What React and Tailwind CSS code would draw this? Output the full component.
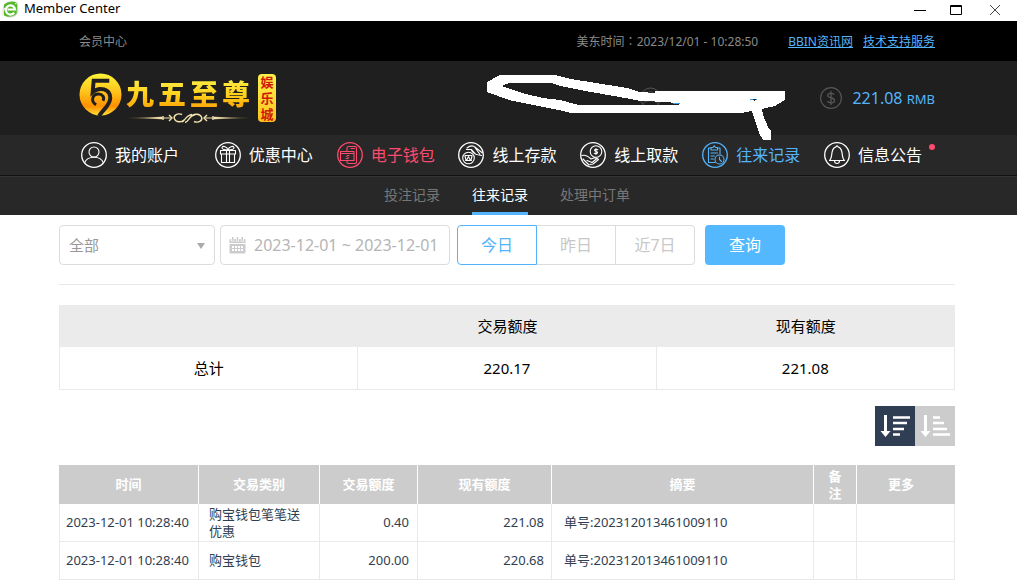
import React from "react";

const gold = "bg-linear-to-b from-[#fff24a] via-[#ffd21c] to-[#ff9a00]";

function BrowserMark() {
  return (
    <svg width="18" height="18" viewBox="0 0 18 18" aria-hidden="true">
      <circle cx="9.500" cy="9.500" r="8" fill="#d4d4d4" />
      <path d="M3 4.500 Q9 -0.500 16.500 2.500 L15.500 14 Q9.500 18.500 3 15.500 Z" fill="#55b82b" />
      <path d="M13.200 12.600 A4.600 4.600 0 1 1 14 9.500 H6.500" fill="none" stroke="#fff" strokeWidth="2.200" />
      <path d="M1.500 16 Q0.500 12 4 8 M14 4 Q17 1.500 16.500 4" fill="none" stroke="#eee" strokeWidth="1.200" />
    </svg>
  );
}

function CoinMark() {
  return (
    <svg width="43" height="43" viewBox="0 0 44 44" aria-hidden="true">
      <defs>
        <linearGradient id="coin" x1="0" y1="0" x2="0" y2="1">
          <stop offset="0" stopColor="#fff43a" />
          <stop offset="0.450" stopColor="#ffc21a" />
          <stop offset="0.780" stopColor="#ff8f00" />
          <stop offset="1" stopColor="#ffe23a" />
        </linearGradient>
      </defs>
      <circle cx="22" cy="22" r="21.500" fill="url(#coin)" />
      <path d="M31 8 H15 L14 19.500 C21 13.500 32 16.500 32 25.500 C32 33 24 38 20.500 44" fill="none" stroke="#1f1f1f" strokeWidth="4" />
      <path d="M17.500 32.500 C11.500 29 13.500 21.500 20 21.500 C24 21.500 26.500 25 24.500 28.500" fill="none" stroke="#1f1f1f" strokeWidth="3" />
    </svg>
  );
}

function Ornament() {
  return (
    <svg width="128" height="12" viewBox="0 0 128 12" fill="none" stroke="#f5e3b0" aria-hidden="true">
      <defs>
        <linearGradient id="fadeL"><stop offset="0" stopColor="#b08a48" stopOpacity="0.200" /><stop offset="1" stopColor="#fff0b8" /></linearGradient>
        <linearGradient id="fadeR"><stop offset="0" stopColor="#fff0b8" /><stop offset="1" stopColor="#b08a48" stopOpacity="0.200" /></linearGradient>
      </defs>
      <path d="M0 6 L36 4.800 V7.200 Z" fill="url(#fadeL)" stroke="none" />
      <path d="M126 6 L88 4.800 V7.200 Z" fill="url(#fadeR)" stroke="none" />
      <path d="M36 6 h10 M78 6 h10" />
      <path d="M37 4 v4 M87 4 v4 M43 3 l3 3 -3 3 M81 3 l-3 3 3 3" strokeWidth="1.400" />
      <path d="M56 2.500 C51 0.500 47 4 48.500 7 C50 10.500 56 10.500 58 8 M68 9.500 C73 11.500 77 8 75.500 5 C74 1.500 68 1.500 66 4" strokeWidth="1.400" />
      <path d="M56 10 C59 9 60 3 66 2.500 M59 10.500 C63 10 63 3.500 69 2.500" strokeWidth="1.300" />
    </svg>
  );
}

function Ring({ children }) {
  return (
    <svg width="26" height="26" viewBox="0 0 26 26" fill="none" stroke="currentColor" strokeWidth="1.100" strokeLinecap="round" strokeLinejoin="round" className="shrink-0" aria-hidden="true">
      <circle cx="13" cy="13" r="12.300" strokeWidth="1.300" />
      {children}
    </svg>
  );
}

const icons = {
  user: (
    <Ring>
      <circle cx="13" cy="10" r="5" />
      <path d="M3.500 21 C5 17 8.500 15.300 13 15.300 C17.500 15.300 21 17 22.500 21" />
    </Ring>
  ),
  gift: (
    <Ring>
      <path d="M5.500 8.500 H20.500 V12 H5.500 Z M6.500 12 V20.500 H19.500 V12 M11.500 8.500 V20.500 M14.500 8.500 V20.500" />
      <path d="M13 8 C10 8 6.500 7.500 7 5.500 C8 3.500 12 4.500 13 8 C14 4.500 18 3.500 19 5.500 C19.500 7.500 16 8 13 8" />
    </Ring>
  ),
  wallet: (
    <Ring>
      <path d="M10 9 V6 Q10 4.500 11.500 4.500 H18 Q19.500 4.500 19.500 6 V20 Q19.500 21.500 18 21.500 H11.500 Q10 21.500 10 20 V18.500" />
      <path d="M3.500 9.500 H17 V18.500 H3.500 Z M3.500 11.500 H17 M14 6.500 H17.500" />
      <path d="M12 13.500 C9 12.700 9 15 10.500 15 C12.500 15.200 12 17.400 9 16.500" strokeWidth="1" />
    </Ring>
  ),
  deposit: (
    <Ring>
      <circle cx="10.500" cy="16" r="5.800" />
      <path d="M7 13.500 H14 M7.500 18.500 H13.500 M7 14 L8 18 M14 14 L13 18 M8.800 18 L10.500 14.500 L12.200 18" />
      <path d="M9 6 C12 3.500 15 3 17.500 5.500 L24.500 11 M8.500 7.500 L13.500 7.500 L18 12.500 M13.500 8.500 C15 11 19 13 23.500 13.500 M17 5.500 L22 12.500" />
    </Ring>
  ),
  withdraw: (
    <Ring>
      <circle cx="16" cy="9.500" r="5.800" />
      <path d="M17.800 7.700 C14.500 6.300 13.500 9 16 9.500 C18.800 10 17.500 12.500 14.200 11.300 M16 6.500 V12.500" />
      <path d="M2 13.500 C5.500 12.500 8 14 11 17 L14.500 15.800 L17 16.500 L12 20.500 L7 18.500 M3 17 L9 23 M17 16.500 L18.500 17.500 L13 22 L10 22.500" />
    </Ring>
  ),
  records: (
    <Ring>
      <path d="M9 6 H6.500 V20.500 H13 M15.500 6 H18 V12 M9 5.500 H11 L12.200 3.800 L13.500 5.500 H15.500 V8 H9 Z" />
      <path d="M9 11 H15.500 M9 14 H12.500 M9 17 H11.500" />
      <circle cx="17.500" cy="17.500" r="4.500" />
      <path d="M17.500 15 V17.500 L19.500 19.500" />
    </Ring>
  ),
  bell: (
    <Ring>
      <path d="M5.500 18.500 C7.500 17 7.500 14 8 10.500 C8.500 7.500 10 5.300 12 4.800 Q13 3 14 4.800 C16 5.300 17.500 7.500 18 10.500 C18.500 14 18.500 17 20.500 18.500 Z M10.500 19 C10.800 22.300 15.200 22.300 15.500 19" strokeWidth="1.200" />
    </Ring>
  ),
};

const nav = [
  { label: "我的账户", icon: "user", style: "text-white mr-3" },
  { label: "优惠中心", icon: "gift", style: "text-white" },
  { label: "电子钱包", icon: "wallet", style: "text-[#ff4a6e]" },
  { label: "线上存款", icon: "deposit", style: "text-white" },
  { label: "线上取款", icon: "withdraw", style: "text-white" },
  { label: "往来记录", icon: "records", style: "text-[#54b4fb]" },
  { label: "信息公告", icon: "bell", style: "text-white", dot: true },
];

const rows = [
  ["2023-12-01 10:28:40", "购宝钱包笔笔送优惠", "0.40", "221.08", "单号:202312013461009110"],
  ["2023-12-01 10:28:40", "购宝钱包", "200.00", "220.68", "单号:202312013461009110"],
];

function TitleBar() {
  return (
    <div className="flex h-[21px] items-center justify-between bg-white pr-4 text-black">
      <div className="flex items-center gap-[5px] pb-[3px] pl-px">
        <BrowserMark />
        <h1 className="pb-[3px] text-[13px] leading-4">Member Center</h1>
      </div>
      <div className="flex items-center gap-6">
        <button type="button" aria-label="Minimize">
          <svg width="12" height="12" viewBox="0 0 12 12" className="block"><path d="M0 5.500 H12" stroke="#000" /></svg>
        </button>
        <button type="button" aria-label="Maximize">
          <svg width="12" height="12" viewBox="0 0 12 12" className="block" fill="none" stroke="#000"><path d="M0.500 0.500 H11.500 V9.500 H0.500 Z M0.500 1.500 H11.500" /></svg>
        </button>
        <button type="button" aria-label="Close" className="ml-[3px]">
          <svg width="12" height="12" viewBox="0 0 12 12" className="block" stroke="#444"><path d="M1 0 L11 10 M11 0 L1 10" /></svg>
        </button>
      </div>
    </div>
  );
}

function Scribble() {
  return (
    <svg width="300" height="66" viewBox="487 75 300 66" className="absolute top-[14px] right-[230px] z-10" shapeRendering="crispEdges" aria-hidden="true">
      <path
        fill="#fff"
        fillRule="evenodd"
        d="M500 75 L555 75 L571 79 L590 82 L627 88 L640 92 L655 93 V91 H785 V100 L775 106 L762 109 L763 115 L768 127 L771 131 V140 H763 L759 133 L752 111 L741 113 H571 L559 110 L543 107 L509 100 L487 92 V82 Z M502 86 L509 83 H551 L560 86 L580 90 L597 93 L625 98 L640 101 L669 102 L675 104 L683 105 H579 L560 100 L543 98 L522 93 L513 90 Z"
      />
      <path d="M673 103.500 H680 M750 99.500 H757" stroke="#2f9dee" />
      <path d="M753 99.500 H756 M754 100.500 H755" stroke="#222" />
    </svg>
  );
}

function Header() {
  return (
    <header>
      <div className="flex h-10 items-center justify-between bg-black pt-px pr-[82px] pl-[79px] text-xs text-[#8a8a8a]">
        <span>会员中心</span>
        <div className="flex items-center gap-[10px]">
          <span className="mr-5">
            美东时间<span lang="zh-TW" className="font-['Noto_Sans_CJK_TC',sans-serif]">：</span>2023/12/01 - 10:28:50
          </span>
          <a href="#news" className="text-[#54b4fb] underline">BBIN资讯网</a>
          <a href="#support" className="text-[#54b4fb] underline">技术支持服务</a>
        </div>
      </div>

      <div className="relative flex h-[74px] items-center justify-between bg-[#1f1f1f] pr-[82px] pl-[79px]">
        <a href="#home" className="flex items-center gap-1" aria-label="九五至尊 娱乐城">
          <div className="pb-2"><CoinMark /></div>
          <div className="flex flex-col pt-[3px]">
            <div className={"flex gap-1 bg-clip-text text-[28px] leading-9 font-black text-transparent " + gold}>
              <span>九</span><span>五</span><span>至</span><span>尊</span>
            </div>
            <Ornament />
          </div>
          <div className="flex w-[18px] flex-col items-center rounded-[4px] bg-linear-to-b from-[#fff24a] to-[#ffc21a] text-[13px] leading-4 font-bold text-[#d01808]">
            <span>娱</span><span>乐</span><span>城</span>
          </div>
        </a>
        <div className="flex items-center gap-[159px] text-[#555]">
          <svg width="21" height="22" viewBox="0 0 21 22" fill="none" stroke="currentColor" aria-hidden="true">
            <circle cx="10.500" cy="11" r="10" />
            <circle cx="10.500" cy="9" r="4.200" />
            <path d="M2.500 17 C5 12.500 16 12.500 18.500 17" />
          </svg>
          <div className="flex items-center gap-[10px]">
            <svg width="22" height="22" viewBox="0 0 22 22" fill="none" stroke="currentColor" aria-hidden="true">
              <circle cx="11" cy="11" r="10.400" strokeWidth="1.200" />
              <path d="M14.300 7.500 C12.500 5.700 7.500 5.800 7.700 8.500 C8 11.500 14.500 10 14.500 13.500 C14.500 16.500 9 16.500 7.300 14.200 M11 4 V18" strokeWidth="1.300" />
            </svg>
            <span className="text-base text-[#54b4fb]">221.08 <span className="text-[13px]">RMB</span></span>
          </div>
        </div>
        <Scribble />
      </div>

      <nav className="flex h-[41px] items-center justify-between border-b border-[#111] bg-[#282828] pr-[95px] pl-[81px] text-base" aria-label="主菜单">
        {nav.map((item) => (
          <a key={item.label} href="#" className={"relative flex items-center gap-2 whitespace-nowrap " + item.style}>
            {icons[item.icon]}
            {item.label}
            {item.dot && <span className="absolute top-[2px] -right-[13px] size-[6px] rounded-full bg-[#ff4a6e]" />}
          </a>
        ))}
      </nav>

      <nav className="flex h-[39px] justify-center gap-8 border-t border-[#343434] bg-[#282828] pr-[3px] text-sm text-[#777]" aria-label="记录">
        <a href="#bets" className="flex items-center border-b-3 border-transparent">投注记录</a>
        <a href="#records" aria-current="page" className="flex items-center border-b-3 border-[#54b4fb] text-white">往来记录</a>
        <a href="#pending" className="flex items-center border-b-3 border-transparent">处理中订单</a>
      </nav>
    </header>
  );
}

function Filters() {
  return (
    <form className="flex items-center border-b border-[#e9e9e9] pb-[19px]" onSubmit={(e) => e.preventDefault()}>
      <div className="relative mr-[5px]">
        <select aria-label="交易类别" className="h-10 w-[156px] appearance-none rounded-[4px] border border-[#dcdcdc] bg-white px-[9px] text-[15px] text-[#999]">
          <option>全部</option>
        </select>
        <svg width="8" height="6" viewBox="0 0 8 6" className="pointer-events-none absolute top-[18px] right-[10px]"><path d="M0 0 H8 L4 6 Z" fill="#aaa" /></svg>
      </div>
      <label className="mr-[7px] flex h-10 w-[230px] items-center gap-2 rounded-[4px] border border-[#dcdcdc] pl-2">
        <svg width="17" height="17" viewBox="0 0 17 17" className="shrink-0" aria-label="日期">
          <path d="M0.500 3 Q0.500 2 1.500 2 H15.500 Q16.500 2 16.500 3 V6 H0.500 Z M0.500 7 H16.500 V15.500 Q16.500 16.500 15.500 16.500 H1.500 Q0.500 16.500 0.500 15.500 Z" fill="#ccc" />
          <path d="M3.700 0 V4.500 M8.500 0 V4.500 M13.300 0 V4.500" stroke="#fff" strokeWidth="3.200" />
          <path d="M3.700 0 V4 M8.500 0 V4 M13.300 0 V4" stroke="#ccc" strokeWidth="1.600" />
          <path d="M3 10 H14 M3 13 H14" stroke="#fff" strokeWidth="2" strokeDasharray="2 1" />
        </svg>
        <input type="text" defaultValue="2023-12-01 ~ 2023-12-01" className="w-full min-w-0 bg-transparent text-base text-[#b5b5b5] outline-none" />
      </label>
      <div className="mr-[10px] flex text-base text-[#c8c8c8]">
        <button type="button" className="h-10 w-20 rounded-l-[4px] border border-[#54b4fb] text-[#54b4fb]">今日</button>
        <button type="button" className="h-10 w-[79px] border-y border-r border-[#dcdcdc]">昨日</button>
        <button type="button" className="h-10 w-[79px] rounded-r-[4px] border-y border-r border-[#dcdcdc]">近7日</button>
      </div>
      <button type="submit" className="h-10 w-20 rounded-[4px] bg-[#54b8ff] text-base text-white">查询</button>
    </form>
  );
}

function Summary() {
  return (
    <table className="mt-5 w-full table-fixed border-separate border-spacing-0 border-l border-[#e9e9e9] text-center text-[15px] text-black">
      <thead>
        <tr className="h-[42px] bg-[#ebebeb]">
          <th className="font-normal"></th>
          <th className="font-normal">交易额度</th>
          <th className="font-normal">现有额度</th>
        </tr>
      </thead>
      <tbody>
        <tr className="h-[43px]">
          <td className="border-r border-b border-[#e9e9e9]">总计</td>
          <td className="border-r border-b border-[#e9e9e9]">220.17</td>
          <td className="border-r border-b border-[#e9e9e9]">221.08</td>
        </tr>
      </tbody>
    </table>
  );
}

function SortIcon({ bars }) {
  return (
    <svg width="40" height="40" viewBox="0 0 40 40" className="block" aria-hidden="true">
      <path d="M9 9 H12 V25 H15.500 L10.500 31 L5.500 25 H9 Z" fill="#fff" />
      <path d={bars} stroke="#fff" strokeWidth="2.600" />
    </svg>
  );
}

function SortToggle() {
  return (
    <div className="mt-4 flex justify-end">
      <button type="button" aria-label="降序" className="bg-[#2f3e52]">
        <SortIcon bars="M18 11.500 H35 M18 17 H32 M18 23 H29 M18 28.500 H25" />
      </button>
      <button type="button" aria-label="升序" className="bg-[#ccc]">
        <SortIcon bars="M18 11.500 H25 M18 17 H29 M18 23 H32 M18 28.500 H35" />
      </button>
    </div>
  );
}

function Records() {
  const td = "border-r border-b border-[#e9e9e9] ";
  const th = "border-r border-white ";
  return (
    <table className="mt-[19px] w-full table-fixed border-separate border-spacing-0 text-[13px] leading-[17px] text-[#2f3e52]">
      <colgroup>
        <col className="w-[140px]" />
        <col className="w-[121px]" />
        <col className="w-[98px]" />
        <col className="w-[134px]" />
        <col />
        <col className="w-[43px]" />
        <col className="w-[98px]" />
      </colgroup>
      <thead>
        <tr className="h-[39px] bg-[#ccc] text-white">
          <th className={th}>时间</th>
          <th className={th}>交易类别</th>
          <th className={th}>交易额度</th>
          <th className={th}>现有额度</th>
          <th className={th}>摘要</th>
          <th className={th + "px-3"}>备注</th>
          <th className="pr-[10px]">更多</th>
        </tr>
      </thead>
      <tbody>
        {rows.map((r) => (
          <tr key={r[2]} className="h-[38px]">
            <td className={td + "border-l pl-[6px] whitespace-nowrap"}>{r[0]}</td>
            <td className={td + "px-[10px]"}>{r[1]}</td>
            <td className={td + "pr-2 text-right"}>{r[2]}</td>
            <td className={td + "pr-[7px] text-right"}>{r[3]}</td>
            <td className={td + "pl-3"}>{r[4]}</td>
            <td className={td}></td>
            <td className={td}></td>
          </tr>
        ))}
      </tbody>
    </table>
  );
}

export default function App() {
  return (
    <div className="bg-white font-['Noto_Sans','Noto_Sans_CJK_SC',sans-serif]">
      <TitleBar />
      <Header />
      <main className="pt-[10px] pr-[62px] pl-[59px]">
        <Filters />
        <Summary />
        <SortToggle />
        <Records />
      </main>
    </div>
  );
}
